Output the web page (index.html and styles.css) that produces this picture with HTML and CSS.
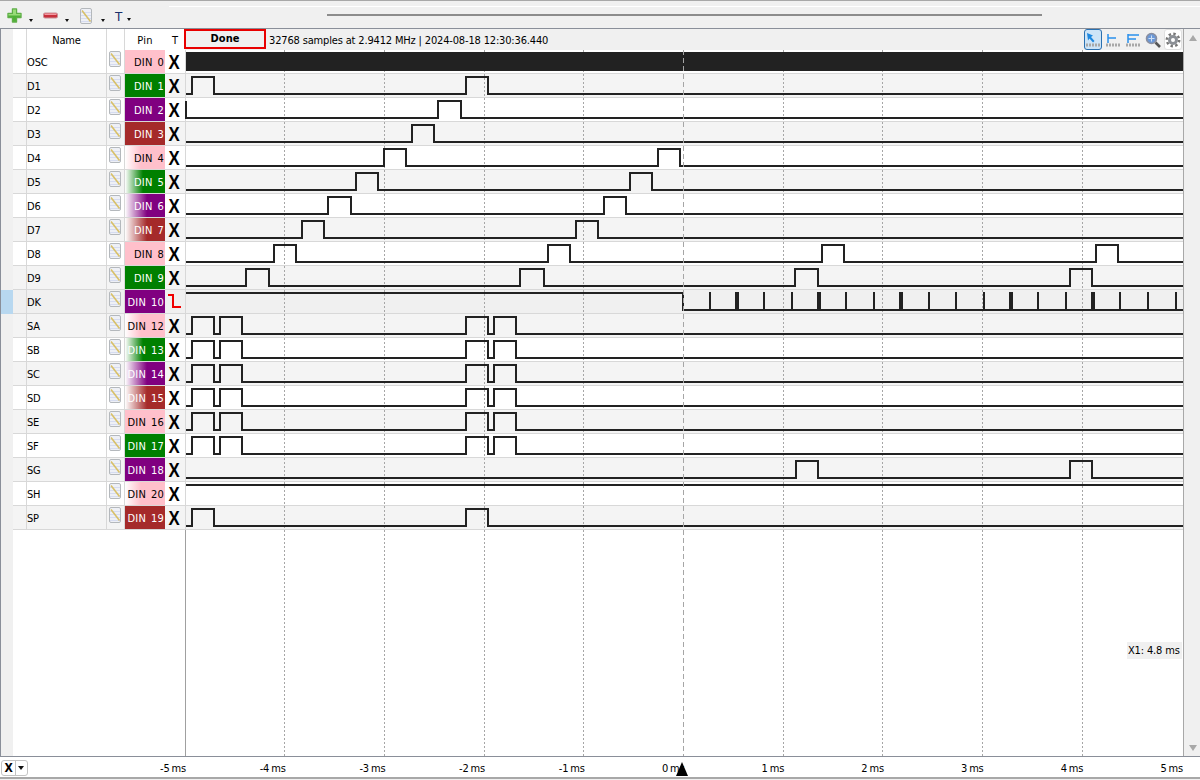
FILE: index.html
```html
<!DOCTYPE html>
<html lang="en">
<head>
<meta charset="utf-8">
<title>Logic analyzer</title>
<link rel="stylesheet" href="styles.css">
</head>
<body>
<svg class="sprite" width="0" height="0" aria-hidden="true">
  <defs>
    <symbol id="ed" viewBox="0 0 12 16">
      <rect x="0.5" y="0.5" width="11" height="15" rx="1.5" class="ed-paper"/>
      <path d="M1 4.5H11M1 7.5H11M1 10.5H11M1 13.5H11" class="ed-lines"/>
      <path d="M2 2.5L10.5 13.5" class="ed-pen"/>
    </symbol>
  </defs>
</svg>
<div class="app">
  <header class="toolbar">
    <div class="tool">
      <svg class="ico" viewBox="0 0 15 15" width="15" height="15"><path d="M5.5 1H9.5V5.5H14V9.5H9.5V14H5.5V9.5H1V5.5H5.5Z" class="plus"/><path d="M6 1.5H9V6H13.5V7.5H1.5V6H6Z" class="plus-hi"/></svg>
      <span class="caret"></span>
    </div>
    <div class="tool">
      <svg class="ico" viewBox="0 0 15 15" width="15" height="15"><rect x="0.5" y="5" width="14" height="5" rx="1.5" class="minus"/><rect x="1.5" y="5.5" width="12" height="1.5" class="minus-hi"/></svg>
      <span class="caret"></span>
    </div>
    <div class="tool tool-ed">
      <svg class="edit"><use href="#ed"/></svg>
      <span class="caret"></span>
    </div>
    <div class="tool tool-t">
      <span class="t-label">T</span>
      <span class="caret"></span>
    </div>
    <div class="dock"><span class="handle"></span></div>
  </header>

  <main class="panel">
    <div class="gutter">
      <div class="gutter-sel"></div>
    </div>
    <div class="table">
      <div class="row head"><span class="c-num"></span><span class="c-name">Name</span><span class="c-ed"></span><span class="c-pin">Pin</span><span class="c-t">T</span></div>
      <div class="row"><span class="c-num"></span><span class="c-name">OSC</span><span class="c-ed"><svg class="edit"><use href="#ed"/></svg></span><span class="c-pin pink"><i>DIN</i><i>0</i></span><span class="c-t"><b class="x">X</b></span></div>
      <div class="row alt"><span class="c-num"></span><span class="c-name">D1</span><span class="c-ed"><svg class="edit"><use href="#ed"/></svg></span><span class="c-pin green"><i>DIN</i><i>1</i></span><span class="c-t"><b class="x">X</b></span></div>
      <div class="row"><span class="c-num"></span><span class="c-name">D2</span><span class="c-ed"><svg class="edit"><use href="#ed"/></svg></span><span class="c-pin purple"><i>DIN</i><i>2</i></span><span class="c-t"><b class="x">X</b></span></div>
      <div class="row alt"><span class="c-num"></span><span class="c-name">D3</span><span class="c-ed"><svg class="edit"><use href="#ed"/></svg></span><span class="c-pin brown"><i>DIN</i><i>3</i></span><span class="c-t"><b class="x">X</b></span></div>
      <div class="row"><span class="c-num"></span><span class="c-name">D4</span><span class="c-ed"><svg class="edit"><use href="#ed"/></svg></span><span class="c-pin g-pink"><i>DIN</i><i>4</i></span><span class="c-t"><b class="x">X</b></span></div>
      <div class="row alt"><span class="c-num"></span><span class="c-name">D5</span><span class="c-ed"><svg class="edit"><use href="#ed"/></svg></span><span class="c-pin g-green"><i>DIN</i><i>5</i></span><span class="c-t"><b class="x">X</b></span></div>
      <div class="row"><span class="c-num"></span><span class="c-name">D6</span><span class="c-ed"><svg class="edit"><use href="#ed"/></svg></span><span class="c-pin g-purple"><i>DIN</i><i>6</i></span><span class="c-t"><b class="x">X</b></span></div>
      <div class="row alt"><span class="c-num"></span><span class="c-name">D7</span><span class="c-ed"><svg class="edit"><use href="#ed"/></svg></span><span class="c-pin g-brown"><i>DIN</i><i>7</i></span><span class="c-t"><b class="x">X</b></span></div>
      <div class="row"><span class="c-num"></span><span class="c-name">D8</span><span class="c-ed"><svg class="edit"><use href="#ed"/></svg></span><span class="c-pin pink"><i>DIN</i><i>8</i></span><span class="c-t"><b class="x">X</b></span></div>
      <div class="row alt"><span class="c-num"></span><span class="c-name">D9</span><span class="c-ed"><svg class="edit"><use href="#ed"/></svg></span><span class="c-pin green"><i>DIN</i><i>9</i></span><span class="c-t"><b class="x">X</b></span></div>
      <div class="row sel"><span class="c-num"></span><span class="c-name">DK</span><span class="c-ed"><svg class="edit edit-sel"><use href="#ed"/></svg></span><span class="c-pin purple"><i>DIN</i><i>10</i></span><span class="c-t"><svg class="fall" viewBox="0 0 20 23" width="20" height="23"><path d="M3 5H8V17H16"/></svg></span></div>
      <div class="row alt"><span class="c-num"></span><span class="c-name">SA</span><span class="c-ed"><svg class="edit"><use href="#ed"/></svg></span><span class="c-pin g-pink"><i>DIN</i><i>12</i></span><span class="c-t"><b class="x">X</b></span></div>
      <div class="row"><span class="c-num"></span><span class="c-name">SB</span><span class="c-ed"><svg class="edit"><use href="#ed"/></svg></span><span class="c-pin g-green"><i>DIN</i><i>13</i></span><span class="c-t"><b class="x">X</b></span></div>
      <div class="row alt"><span class="c-num"></span><span class="c-name">SC</span><span class="c-ed"><svg class="edit"><use href="#ed"/></svg></span><span class="c-pin g-purple"><i>DIN</i><i>14</i></span><span class="c-t"><b class="x">X</b></span></div>
      <div class="row"><span class="c-num"></span><span class="c-name">SD</span><span class="c-ed"><svg class="edit"><use href="#ed"/></svg></span><span class="c-pin g-brown"><i>DIN</i><i>15</i></span><span class="c-t"><b class="x">X</b></span></div>
      <div class="row alt"><span class="c-num"></span><span class="c-name">SE</span><span class="c-ed"><svg class="edit"><use href="#ed"/></svg></span><span class="c-pin pink"><i>DIN</i><i>16</i></span><span class="c-t"><b class="x">X</b></span></div>
      <div class="row"><span class="c-num"></span><span class="c-name">SF</span><span class="c-ed"><svg class="edit"><use href="#ed"/></svg></span><span class="c-pin green"><i>DIN</i><i>17</i></span><span class="c-t"><b class="x">X</b></span></div>
      <div class="row alt"><span class="c-num"></span><span class="c-name">SG</span><span class="c-ed"><svg class="edit"><use href="#ed"/></svg></span><span class="c-pin purple"><i>DIN</i><i>18</i></span><span class="c-t"><b class="x">X</b></span></div>
      <div class="row"><span class="c-num"></span><span class="c-name">SH</span><span class="c-ed"><svg class="edit"><use href="#ed"/></svg></span><span class="c-pin g-pink"><i>DIN</i><i>20</i></span><span class="c-t"><b class="x">X</b></span></div>
      <div class="row alt"><span class="c-num"></span><span class="c-name">SP</span><span class="c-ed"><svg class="edit"><use href="#ed"/></svg></span><span class="c-pin brown"><i>DIN</i><i>19</i></span><span class="c-t"><b class="x">X</b></span></div>
    </div>

    <section class="scope">
      <div class="status">
        <div class="done">Done</div>
        <div class="info">32768 samples at 2.9412 MHz | 2024-08-18 12:30:36.440</div>
        <div class="tools">
          <span class="mode active"><svg viewBox="0 0 16 16" width="16" height="16"><path d="M2 1L8 3.5L6 5L9.5 9L8 10.5L4.5 6.5L3 8.5Z" class="blue"/><path d="M1 13H15" class="ruler"/></svg></span>
          <span class="mode"><svg viewBox="0 0 16 16" width="16" height="16"><path d="M3 2V11M3 6H11" class="blue-line"/><path d="M1 13H15" class="ruler"/></svg></span>
          <span class="mode"><svg viewBox="0 0 16 16" width="16" height="16"><path d="M3 2V11M3 3H14M3 7H11" class="blue-line"/><path d="M1 13H15" class="ruler"/></svg></span>
          <span class="mode"><svg viewBox="0 0 16 16" width="16" height="16"><circle cx="6.5" cy="6.5" r="5" class="lens"/><path d="M3.5 6.5H9.5M6.5 3.5V9.5" class="lens-cross"/><path d="M10.5 10.5L15 15" class="lens-handle"/></svg></span>
          <span class="mode gear"><svg viewBox="0 0 16 16" width="16" height="16"><circle cx="8" cy="8" r="5" class="gear-body"/><circle cx="8" cy="8" r="6.2" class="gear-teeth"/><circle cx="8" cy="8" r="2" class="gear-hole"/></svg></span>
        </div>
      </div>
      <div class="plot">
        <svg class="wave" viewBox="185 50 998 706" width="998" height="706">
          <rect class="bg-alt" x="185" y="74" width="998" height="24"/>
          <rect class="bg-alt" x="185" y="122" width="998" height="24"/>
          <rect class="bg-alt" x="185" y="170" width="998" height="24"/>
          <rect class="bg-alt" x="185" y="218" width="998" height="24"/>
          <rect class="bg-alt" x="185" y="266" width="998" height="24"/>
          <rect class="bg-sel" x="185" y="290" width="998" height="24"/>
          <rect class="bg-alt" x="185" y="314" width="998" height="24"/>
          <rect class="bg-alt" x="185" y="362" width="998" height="24"/>
          <rect class="bg-alt" x="185" y="410" width="998" height="24"/>
          <rect class="bg-alt" x="185" y="458" width="998" height="24"/>
          <rect class="bg-alt" x="185" y="506" width="998" height="24"/>
          <path class="sep" d="M185 73.5H1183M185 97.5H1183M185 121.5H1183M185 145.5H1183M185 169.5H1183M185 193.5H1183M185 217.5H1183M185 241.5H1183M185 265.5H1183M185 289.5H1183M185 313.5H1183M185 337.5H1183M185 361.5H1183M185 385.5H1183M185 409.5H1183M185 433.5H1183M185 457.5H1183M185 481.5H1183M185 505.5H1183M185 529.5H1183M185.5 50V530"/>
          <path class="edge" d="M185.5 530V756"/>
          <path class="grid" d="M284.5 50V756M384.5 50V756M484.5 50V756M583.5 50V756M783.5 50V756M882.5 50V756M982.5 50V756M1082.5 50V756"/>
          <rect class="osc" x="186" y="52" width="997" height="19"/>
          <path class="sig" d="M186 94H192V77H214V94H466V77H488V94H1183"/>
          <path class="sig" d="M186 101V118H438V101H461V118H1183"/>
          <path class="sig" d="M186 142H412V125H434V142H1183"/>
          <path class="sig" d="M186 166H384V149H406V166H658V149H680V166H1183"/>
          <path class="sig" d="M186 190H356V173H378V190H630V173H652V190H1183"/>
          <path class="sig" d="M186 214H328V197H351V214H604V197H626V214H1183"/>
          <path class="sig" d="M186 238H302V221H324V238H576V221H598V238H1183"/>
          <path class="sig" d="M186 262H274V245H296V262H548V245H570V262H822V245H844V262H1096V245H1118V262H1183"/>
          <path class="sig" d="M186 286H246V269H269V286H520V269H544V286H795V269H818V286H1070V269H1092V286H1183"/>
          <path class="sig" d="M186 293H683V310H1183"/>
          <path class="sig" d="M710 292V310M764 292V310M792 292V310M846 292V310M874 292V310M929 292V310M956 292V310M984 292V310M1038 292V310M1066 292V310M1120 292V310M1148 292V310M1176 292V310"/>
          <path class="sig thick" d="M737 292V310M819 292V310M901 292V310M1011 292V310M1093 292V310"/>
          <path class="sig" d="M186 334H192V317H214V334H220V317H242V334H466V317H488V334H494V317H516V334H1183"/>
          <path class="sig" d="M186 358H192V341H214V358H220V341H242V358H466V341H488V358H494V341H516V358H1183"/>
          <path class="sig" d="M186 382H192V365H214V382H220V365H242V382H466V365H488V382H494V365H516V382H1183"/>
          <path class="sig" d="M186 406H192V389H214V406H220V389H242V406H466V389H488V406H494V389H516V406H1183"/>
          <path class="sig" d="M186 430H192V413H214V430H220V413H242V430H466V413H488V430H494V413H516V430H1183"/>
          <path class="sig" d="M186 454H192V437H214V454H220V437H242V454H466V437H488V454H494V437H516V454H1183"/>
          <path class="sig" d="M186 478H796V461H818V478H1070V461H1092V478H1183"/>
          <path class="sig" d="M186 485H1183"/>
          <path class="sig" d="M186 526H192V509H214V526H466V509H488V526H1183"/>
          <path class="cursor" d="M683.5 50V756"/>
        </svg>
        <div class="x1">X1: 4.8 ms</div>
      </div>
    </section>

    <aside class="scroll">
      <span class="arrow-up"></span>
      <span class="arrow-down"></span>
    </aside>
  </main>

  <footer class="axis">
    <div class="axis-first">
      <div class="combo"><b>X</b><span class="combo-caret"></span></div>
      <span>-5 ms</span>
    </div>
    <span class="tick">-4 ms</span>
    <span class="tick">-3 ms</span>
    <span class="tick">-2 ms</span>
    <span class="tick">-1 ms</span>
    <span class="tick">0 ms</span>
    <span class="tick">1 ms</span>
    <span class="tick">2 ms</span>
    <span class="tick">3 ms</span>
    <span class="tick">4 ms</span>
    <span class="tick">5 ms</span>
    <span class="marker"></span>
  </footer>
</div>
</body>
</html>
```

FILE: styles.css
```css
* { box-sizing: border-box; }
html, body { margin: 0; padding: 0; }
body {
  width: 1200px;
  height: 780px;
  overflow: hidden;
  background: #f0f0f0;
  font-family: "DejaVu Sans Condensed", "DejaVu Sans", sans-serif;
  font-stretch: condensed;
  font-size: 11px;
  letter-spacing: -0.16px;
  color: #000;
}
.sprite { display: block; width: 0; height: 0; }
.app { display: flex; flex-direction: column; width: 1200px; height: 780px; }

/* toolbar */
.toolbar {
  display: flex;
  height: 29px;
  flex: none;
  padding-left: 7px;
  background: #f0f0f0;
  border-top: 1px solid #a8a8a8;
  border-bottom: 1px solid #8a8f99;
}
.tool { display: flex; width: 36px; flex: none; height: 27px; padding-top: 7px; }
.tool .ico { flex: none; }
.caret {
  display: block;
  width: 0; height: 0;
  margin: 11px 0 0 7px;
  border-left: 2.5px solid transparent;
  border-right: 2.5px solid transparent;
  border-top: 3px solid #111;
}
.tool-ed { padding-left: 1px; }
.tool-ed .edit { margin-right: 2px; }
.tool-t .t-label { width: 8px; font-family: "DejaVu Sans", sans-serif; font-stretch: normal; font-size: 12px; line-height: 14px; margin-top: 2px; color: #1a2f6a; }
.tool-t .caret { margin: 10px 0 0 4px; }
.dock {
  flex: 1;
  display: flex;
  justify-content: center;
  margin: 5px 0 0 18px;
  height: 16px;
  border-top: 1px solid #fff;
  padding-top: 7px;
}
.handle { display: block; width: 715px; height: 2px; background: #8c8c8c; }
.plus { fill: #4fb236; stroke: #5fae48; stroke-width: 1.4; stroke-linejoin: round; }
.plus-hi { fill: #98dc78; }
.minus { fill: #c8303c; stroke: #c89096; stroke-width: 1; }
.minus-hi { fill: #f29aa2; }

/* edit icon */
.edit { display: block; width: 12px; height: 16px; flex: none; }
.ed-paper { fill: #eef0f6; stroke: #b4b8bc; stroke-width: 1; }
.ed-lines { stroke: #d6dcf0; stroke-width: 1; fill: none; }
.ed-pen { stroke: #d8c068; stroke-width: 1.6; fill: none; }
.edit-sel .ed-paper { fill: #94bce0; stroke: #8aa0b4; }
.edit-sel .ed-lines { stroke: #88b0d8; }
.edit-sel .ed-pen { stroke: #5c8098; }

/* panel */
.panel {
  display: flex;
  flex: none;
  height: 727px;
  background: #fff;
  border-left: 1px solid #8a8f99;
}
.gutter { width: 12px; flex: none; background: #f0f0f0; padding-top: 261px; }
.gutter-sel { height: 24px; background: #b8d8f0; }

.table { width: 172px; flex: none; background: #fff; }
.row { display: flex; height: 24px; background: #fff; }
.row.alt { background: #f4f4f4; }
.row.sel { background: #f0f0f0; }
.row.head { height: 21px; background: #fff; }
.row > span { display: flex; align-items: center; border-right: 1px solid #d8d8d8; border-bottom: 1px solid #d8d8d8; padding-top: 2px; }
.row.head > span { border-bottom: 0; justify-content: center; padding: 1px 0 0; }
.c-num { width: 14px; flex: none; padding-top: 0 !important; }
.c-name { width: 80px; flex: none; }
.row > .c-ed { width: 18px; flex: none; padding: 1px 0 0 2px; align-items: flex-start; }
.c-pin { width: 40px; flex: none; justify-content: flex-end; padding-right: 1px; letter-spacing: 0.2px; }
.c-pin i { font-style: normal; margin-left: 5px; }
.row > .c-pin { border-right: 0; }
.row > .c-t { width: 20px; flex: none; justify-content: center; border-right: 0; padding: 0; }
.row.head > .c-t { padding-top: 1px; }
.x {
  display: block;
  font-family: "Liberation Sans", sans-serif;
  font-stretch: normal;
  font-size: 21px;
  letter-spacing: 0;
  line-height: 23px;
  font-weight: bold;
  margin: -1px 1px 0 0;
  transform: scaleX(0.8);
}
.fall { display: block; }
.fall path { fill: none; stroke: #f00000; stroke-width: 2; }

.pink { background: #ffc0cb; color: #000; }
.green { background: #008000; color: #fff; }
.purple { background: #800080; color: #fff; }
.brown { background: #a52a2a; color: #fff; }
.g-pink { background: linear-gradient(90deg, #fff 0, #ffc0cb 16px); color: #000; }
.g-green { background: linear-gradient(90deg, #fff 0, #008000 18px); color: #fff; }
.g-purple { background: linear-gradient(90deg, #fff 0, #800080 22px); color: #fff; }
.g-brown { background: linear-gradient(90deg, #fff 0, #a52a2a 22px); color: #fff; }

/* scope */
.scope { width: 998px; flex: none; display: flex; flex-direction: column; }
.status { display: flex; height: 21px; align-items: stretch; background: #f0f0f0; }
.done {
  width: 82px;
  height: 20px;
  flex: none;
  margin-left: -1px;
  border: 2px solid #e80000;
  background: #f0f0f0;
  font-weight: bold;
  text-align: center;
  line-height: 16px;
  font-size: 11px;
  letter-spacing: 0;
}
.info { flex: 1; padding: 1px 0 0 3px; line-height: 21px; }
.tools { display: flex; flex: none; padding-right: 1px; gap: 2px; }
.mode { display: flex; width: 18px; height: 21px; align-items: center; justify-content: center; border-radius: 3px; }
.mode.active { background: #cde4f7; border: 1px solid #2a70b0; }
.mode.gear { background: #fff; border: 1px solid #e0e0e0; }
.blue { fill: #1e88e0; }
.blue-line { fill: none; stroke: #2a90ec; stroke-width: 1.5; }
.ruler { fill: none; stroke: #a8a8a8; stroke-width: 3; stroke-dasharray: 2 1; }
.lens { fill: #6a98d8; stroke: #8a8fa0; stroke-width: 1.6; }
.lens-cross { stroke: #cfe0f4; stroke-width: 1; fill: none; }
.lens-handle { stroke: #555; stroke-width: 2.6; fill: none; }
.gear-body { fill: #8c9096; }
.gear-teeth { fill: none; stroke: #777; stroke-width: 2.4; stroke-dasharray: 2.4 2.4; }
.gear-hole { fill: #fff; }

.plot { position: relative; flex: 1; background: #fff; }
.wave { display: block; }
.bg-alt { fill: #f4f4f4; }
.bg-sel { fill: #f0f0f0; }
.sep { stroke: #d8d8d8; stroke-width: 1; fill: none; shape-rendering: crispEdges; }
.edge { stroke: #a0a0a0; stroke-width: 1; fill: none; shape-rendering: crispEdges; }
.grid { stroke: #a6a6a6; stroke-width: 1; stroke-dasharray: 2 2; fill: none; shape-rendering: crispEdges; }
.cursor { stroke: #a6a6a6; stroke-width: 1; stroke-dasharray: 5 3; fill: none; shape-rendering: crispEdges; }
.osc { fill: #222; }
.sig { fill: none; stroke: #222; stroke-width: 2; shape-rendering: crispEdges; }
.sig.thick { stroke-width: 4; }
.x1 {
  position: absolute;
  right: 1px;
  top: 592px;
  width: 55px;
  height: 17px;
  background: #f0f0f0;
  line-height: 18px;
  padding-left: 1px;
  white-space: nowrap;
}

/* scrollbar */
.scroll {
  flex: 1;
  display: flex;
  flex-direction: column;
  justify-content: space-between;
  align-items: center;
  padding: 6px 0 5px 1px;
  background: #f0f0f0;
  border-left: 1px solid #a8a8a8;
}
.arrow-up { width: 0; height: 0; border-left: 4.5px solid transparent; border-right: 4.5px solid transparent; border-bottom: 6px solid #a8a8a8; }
.arrow-down { width: 0; height: 0; border-left: 4.5px solid transparent; border-right: 4.5px solid transparent; border-top: 6px solid #a8a8a8; }

/* axis */
.axis {
  position: relative;
  display: flex;
  height: 23px;
  flex: none;
  padding: 0 17px 0 0;
  background: #fff;
  border-top: 1px solid #8a8f99;
  border-bottom: 2px solid #a8a8a8;
  line-height: 23px;
  word-spacing: -1px;
}
.axis-first { display: flex; width: 186px; flex: none; justify-content: space-between; padding-left: 1px; }
.tick { flex: 1; text-align: right; }
.combo {
  display: flex;
  align-items: center;
  width: 27px;
  height: 16px;
  margin-top: 3px;
  border: 1px solid #c4c4c4;
  border-radius: 3px;
  background: #fff;
  line-height: 14px;
}
.combo b { width: 14px; text-align: center; font-size: 12px; border-right: 1px solid #c4c4c4; }
.combo-caret { width: 0; height: 0; margin-left: 2px; border-left: 3.5px solid transparent; border-right: 3.5px solid transparent; border-top: 4px solid #111; }
.marker {
  position: absolute;
  left: 676px;
  top: 5px;
  width: 0; height: 0;
  border-left: 6px solid transparent;
  border-right: 6px solid transparent;
  border-bottom: 14px solid #000;
}
```
